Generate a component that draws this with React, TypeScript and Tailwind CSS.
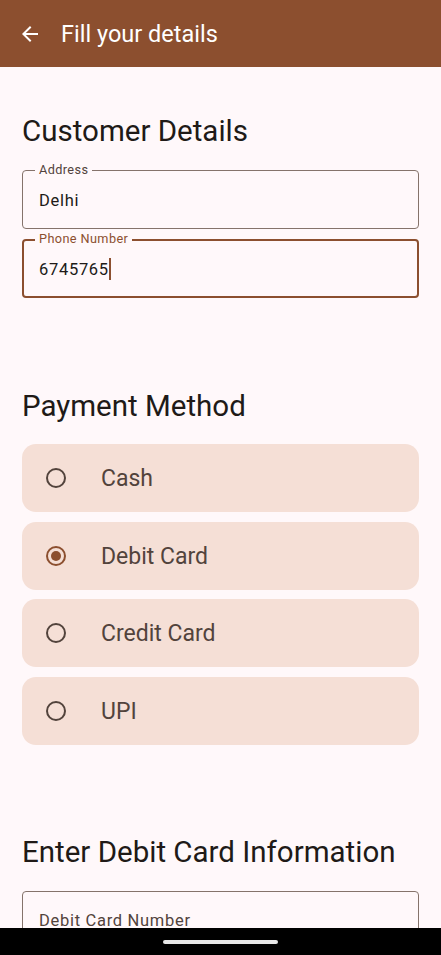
import React, { useState } from 'react'

const methods = ['Cash', 'Debit Card', 'Credit Card', 'UPI']

function OutlinedField({ label, value, focused }: { label: string; value: string; focused?: boolean }) {
  return (
    <div
      className={`relative h-[59px] rounded-[4px] flex items-center px-[16px] pt-[3px] ${
        focused ? 'border-2 border-[#8C4F2F]' : 'border border-[#85736B]'
      }`}
    >
      <span
        className={`absolute ${focused ? 'top-[-10px] left-[11px]' : 'top-[-9px] left-[12px]'} px-[4px] bg-[#FFF8FA] text-[12.7px] leading-[16px] tracking-[0.4px] ${
          focused ? 'text-[#8C4F2F]' : 'text-[#52433C]'
        }`}
      >
        {label}
      </span>
      <span className={`text-[16.5px] tracking-[0.7px] text-[#201A17] ${focused ? '-ml-px' : ''}`}>
        {value}
        {focused && <span className="inline-block w-[2px] h-[22px] bg-[#8C4F2F] align-middle -mt-[3px]" />}
      </span>
    </div>
  )
}

export default function App() {
  const [method, setMethod] = useState('Debit Card')

  return (
    <div className="w-[441px] h-[955px] overflow-hidden flex flex-col bg-[#FFF8FA] font-['Roboto',sans-serif]">
      {/* Top bar */}
      <div className="h-[67px] shrink-0 bg-[#8C4F2F] flex items-center px-[18px] gap-[19px]">
        <svg width="24" height="24" viewBox="0 0 24 24" fill="#FFFFFF">
          <path d="M20 11H7.83l5.59-5.59L12 4l-8 8 8 8 1.41-1.41L7.83 13H20v-2z" />
        </svg>
        <span className="text-white text-[23.5px] leading-[28px]">Fill your details</span>
      </div>

      <div className="flex-1 overflow-hidden px-[22px]">
        {/* Customer details */}
        <h2 className="mt-[46px] text-[29.5px] leading-[36px] text-[#201A17]">Customer Details</h2>
        <div className="mt-[21px] flex flex-col gap-[10px]">
          <OutlinedField label="Address" value="Delhi" />
          <OutlinedField label="Phone Number" value="6745765" focused />
        </div>

        {/* Payment */}
        <h2 className="mt-[90px] text-[29.5px] leading-[36px] text-[#201A17]">Payment Method</h2>
        <div className="mt-[20px] flex flex-col gap-[9.5px]">
          {methods.map((m) => {
            const on = m === method
            return (
              <button
                key={m}
                onClick={() => setMethod(m)}
                className="h-[68px] rounded-[14px] bg-[#F5DFD6] flex items-center pl-[24px] text-left"
              >
                <span
                  className={`w-[20px] h-[20px] rounded-full border-2 flex items-center justify-center ${
                    on ? 'border-[#8C4F2F]' : 'border-[#52433C]'
                  }`}
                >
                  {on && <span className="w-[10px] h-[10px] rounded-full bg-[#8C4F2F]" />}
                </span>
                <span className="ml-[35px] pt-[2px] text-[23px] leading-[28px] text-[#52433C]">{m}</span>
              </button>
            )
          })}
        </div>

        {/* Card info */}
        <h2 className="mt-[89px] text-[29.5px] leading-[36px] text-[#201A17]">Enter Debit Card Information</h2>
        <div className="mt-[21px] h-[59px] rounded-[4px] border border-[#85736B] flex items-center px-[16px] pt-[2px]">
          <span className="text-[16.5px] tracking-[0.7px] text-[#52433C]">Debit Card Number</span>
        </div>
      </div>

      {/* Gesture bar */}
      <div className="h-[27px] shrink-0 bg-black flex items-center justify-center">
        <div className="w-[115px] h-[4px] rounded-full bg-[#E8E8E8]" />
      </div>
    </div>
  )
}
